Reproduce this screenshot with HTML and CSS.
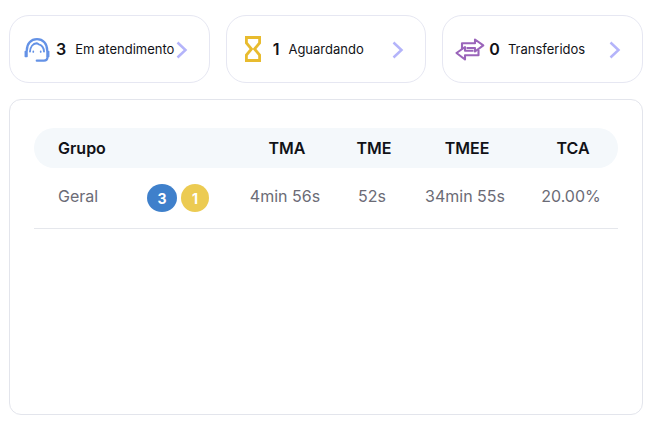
FILE: index.html
```html
<!DOCTYPE html>
<html lang="pt">
<head>
<meta charset="utf-8">
<title>Painel</title>
<link rel="stylesheet" href="styles.css">
</head>
<body>
<div class="page">
  <div class="cards">
    <div class="card card-a">
      <svg class="icon" width="26" height="24" viewBox="0 0 26 24" fill="none" stroke="#6492e6" stroke-width="2.300" stroke-linecap="round" stroke-linejoin="round">
        <path d="M2.800 12.500C2.800 5.500 7 1.200 13 1.200C19 1.200 23.200 5.500 23.200 12.500"/>
        <path d="M6 13.500C6.300 9 9 5.500 12.600 5.200C13.600 5.200 14.200 6 14.800 6.300C17.500 7 19.800 9.800 20 13.500" stroke-width="1.900"/>
        <path d="M1.300 13.500H3V18.500H1.300Z" fill="#6492e6" stroke-width="1.500"/>
        <path d="M23 13.500H24.700V18.500H23Z" fill="#6492e6" stroke-width="1.500"/>
        <path d="M23.500 19.500C23.300 21.500 22 22.700 20 22.700H12.800"/>
        <path d="M9.300 13.400V13.900M16.700 13.400V13.900" stroke-width="1.700"/>
      </svg>
      <span class="count">3</span>
      <span class="label">Em atendimento</span>
      <svg class="chev" width="12" height="18" viewBox="0 0 12 18" fill="none" stroke="#b4b4fa" stroke-width="2.500"><path d="M1.500 1.500L9.500 9L1.500 16.500"/></svg>
    </div>
    <div class="card card-b">
      <svg class="icon" width="16" height="26" viewBox="0 0 16 26" fill="none" stroke="#e8bb2e" stroke-width="2.800">
        <path d="M1.400 1.500H14.600V7L9.500 13L14.600 19V24.500H1.400V19L6.500 13L1.400 7Z"/>
      </svg>
      <span class="count">1</span>
      <span class="label">Aguardando</span>
      <svg class="chev" width="12" height="18" viewBox="0 0 12 18" fill="none" stroke="#b4b4fa" stroke-width="2.500"><path d="M1.500 1.500L9.500 9L1.500 16.500"/></svg>
    </div>
    <div class="card card-c">
      <svg class="icon" width="30" height="24" viewBox="0 0 30 24" fill="none" stroke="#9a64ba" stroke-width="2.100" stroke-linejoin="round">
        <path d="M7 11.500V5.300H20V1.500L28.300 7.300L20 13.500V10H11.500"/>
        <path d="M23.500 12V17.200H10V21.500L1.500 15L10 9V12.800H18.500"/>
      </svg>
      <span class="count">0</span>
      <span class="label">Transferidos</span>
      <svg class="chev" width="12" height="18" viewBox="0 0 12 18" fill="none" stroke="#b4b4fa" stroke-width="2.500"><path d="M1.500 1.500L9.500 9L1.500 16.500"/></svg>
    </div>
  </div>
  <div class="panel">
    <div class="row head">
      <div class="cell first">Grupo</div>
      <div class="cell">TMA</div>
      <div class="cell">TME</div>
      <div class="cell">TMEE</div>
      <div class="cell">TCA</div>
    </div>
    <div class="row body">
      <div class="cell first group">
        <span class="name">Geral</span>
        <span class="badges"><span class="badge blue">3</span><span class="badge yellow">1</span></span>
      </div>
      <div class="cell value">4min 56s</div>
      <div class="cell value">52s</div>
      <div class="cell value">34min 55s</div>
      <div class="cell value">20.00%</div>
    </div>
  </div>
</div>
</body>
</html>
```
FILE: styles.css
```css
* { box-sizing: border-box; }
html, body { margin: 0; padding: 0; background: #fff; }
body { font-family: Inter, "Liberation Sans", sans-serif; color: #111217; }
.page { width: 651px; height: 424px; padding: 15px 8px 9px 9px; display: flex; flex-direction: column; gap: 16px; }
.cards { display: grid; grid-template-columns: repeat(3, 1fr); gap: 16px; }
.card { height: 68px; border: 1px solid #e6e7f2; border-radius: 20px; display: flex; align-items: center; position: relative; }
.card-a { padding-left: 14px; }
.card-b { padding-left: 18px; }
.card-c { padding-left: 12px; }
.icon { flex: none; }
.card-a .icon { margin-top: 2px; }
.card-c .icon { margin-top: 2px; }
.count { font-size: 16px; font-weight: 600; margin-left: 6px; }
.card-b .count { margin-left: 12px; }
.card-c .count { margin-left: 4px; }
.label { font-size: 13px; margin-left: 9px; white-space: nowrap; }
.card-c .label { margin-left: 8px; }
.chev { position: absolute; top: 25px; right: 21px; }
.panel { flex: 1; border: 1px solid #e3e5ec; border-radius: 12px; padding: 28px 24px 0; }
.row { display: grid; grid-template-columns: 204px 94px 80px 106px 100px; width: 584px; align-items: center; text-align: center; }
.head { height: 40px; background: #f4f8fb; border-radius: 20px; font-size: 16px; font-weight: 600; color: #111217; }
.head .cell:not(.first) { padding-left: 4px; }
.body { height: 61px; border-bottom: 1px solid #e5e7ec; font-size: 16px; color: #6b6b76; }
.value { padding-bottom: 5px; }
.cell:last-child { padding-left: 6px; }
.head .cell:last-child { padding-left: 10px; }
.first { text-align: left; padding-left: 24px; }
.group { display: flex; align-items: center; }
.name { width: 89px; padding-bottom: 5px; }
.badges { display: flex; gap: 4px; }
.badge { height: 28px; border-radius: 50%; display: flex; align-items: center; justify-content: center; color: #fff; font-size: 14px; font-weight: 700; }
.blue { width: 30px; background: #3f80cb; }
.yellow { width: 28px; background: #eccb52; }
```
